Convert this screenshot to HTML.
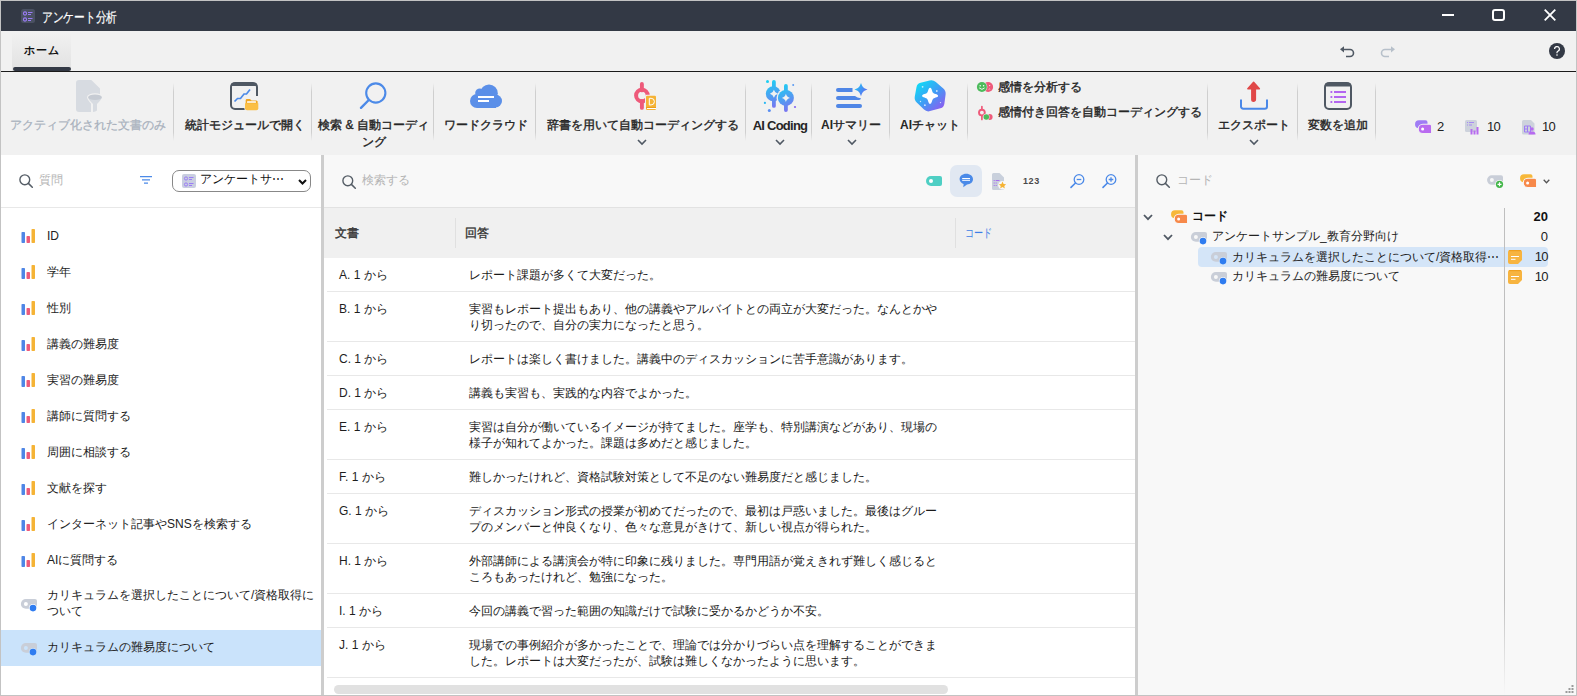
<!DOCTYPE html>
<html lang="ja">
<head>
<meta charset="utf-8">
<style>
*{box-sizing:border-box;margin:0;padding:0}
html,body{width:1577px;height:696px;overflow:hidden;background:#f1f1f1}
body{font-family:"Liberation Sans",sans-serif;color:#1f1f1f;position:relative;font-size:12px}
.a{position:absolute}
svg{position:absolute;display:block;overflow:visible}
.t{position:absolute;white-space:nowrap;line-height:16px}
/* frame */
#frame{position:absolute;left:0;top:0;width:1577px;height:696px;border:1px solid #c3c3c3;pointer-events:none;z-index:50}
#title{left:0;top:0;width:1577px;height:31px;background:#333945}
#title .t{color:#fff;font-size:14px;left:42px;top:9px;-webkit-text-stroke:0.2px #fff}
/* tabs */
#tab{left:12px;top:33px;width:59px;height:38px;background:linear-gradient(#f1f1f1,#e1e1e1)}
#tabline{left:13px;top:67px;width:58px;height:4px;background:#333945;border-radius:2px}
#hline{left:0;top:71px;width:1577px;height:1px;background:#1b1b1b}
/* ribbon */
.sep{position:absolute;top:83px;width:1px;height:58px;background:linear-gradient(rgba(200,200,200,0),#cfcfcf 15%,#cfcfcf 85%,rgba(200,200,200,0))}
.rl{position:absolute;top:117px;font-size:12px;font-weight:normal;-webkit-text-stroke:0.4px currentColor;color:#262626;white-space:nowrap;line-height:17px;text-align:center}
.chev{position:absolute;top:139px;width:10px;height:6px}
/* panels */
#left{left:1px;top:155px;width:320px;height:540px;background:#fff}
#split1{left:321px;top:155px;width:3px;height:540px;background:#cdcdcd}
#center{left:324px;top:155px;width:811px;height:540px;background:#fff}
#split2{left:1135px;top:155px;width:3px;height:540px;background:#cdcdcd}
#right{left:1138px;top:155px;width:438px;height:540px;background:#f8f8f8}
.ph{color:#b5b5b5;font-size:12px}
.li{position:absolute;left:47px;font-size:12px;color:#222;white-space:nowrap;line-height:16px}
.bar{position:absolute;left:21px;width:15px;height:14px;margin-top:1px}
.row{position:absolute;left:327px;width:808px;height:1px;background:#e8e8e8}
.doc{position:absolute;margin-top:1px;left:339px;font-size:12px;color:#1e1e1e;white-space:nowrap;line-height:16px}
.ans{position:absolute;margin-top:1px;left:469px;font-size:12px;color:#1a1a1a;white-space:nowrap;line-height:16px}
</style>
</head>
<body>
<!-- TITLE BAR -->
<div id="title" class="a">
  <svg style="left:21px;top:9px" width="14" height="14" viewBox="0 0 14 14">
    <rect x="0" y="0" width="14" height="14" rx="2.5" fill="#4a5162"/>
    <circle cx="4" cy="4.5" r="1.6" fill="none" stroke="#9b7cf6" stroke-width="1.1"/>
    <circle cx="4" cy="10.5" r="1.6" fill="none" stroke="#9b7cf6" stroke-width="1.1"/>
    <path d="M7 3.5h4.5M7 5.5h3M7 9.5h4.5M7 11.5h3" stroke="#9b7cf6" stroke-width="1"/>
  </svg>
  <div class="t" style="transform:scaleX(0.765);transform-origin:0 0">アンケート分析</div>
  <svg style="left:1442px;top:14px" width="12" height="2"><rect width="12" height="2" fill="#fff"/></svg>
  <svg style="left:1492px;top:9px" width="13" height="12" viewBox="0 0 13 12"><rect x="1" y="1" width="11" height="10" rx="2" fill="none" stroke="#fff" stroke-width="2"/></svg>
  <svg style="left:1544px;top:9px" width="12" height="12" viewBox="0 0 12 12"><path d="M0.7 0.7L11.3 11.3M11.3 0.7L0.7 11.3" stroke="#fff" stroke-width="1.8"/></svg>
</div>
<!-- TAB BAR -->
<div id="tab" class="a"></div>
<div class="t" style="left:24px;top:42px;font-size:11px;font-weight:bold;color:#111;letter-spacing:1.2px">ホーム</div>
<div id="tabline" class="a"></div>
<div id="hline" class="a"></div>
<!-- undo / redo / help -->
<svg style="left:1340px;top:46px" width="15" height="11" viewBox="0 0 15 11">
  <path d="M3 3.5h7a3.5 3.5 0 0 1 0 7H6" fill="none" stroke="#4f5863" stroke-width="1.6"/>
  <path d="M0 3.3L4 0.2V6.4z" fill="#4f5863"/>
</svg>
<svg style="left:1380px;top:46px" width="15" height="11" viewBox="0 0 15 11">
  <path d="M12 3.5H5a3.5 3.5 0 0 0 0 7h4" fill="none" stroke="#b7c0ca" stroke-width="1.6"/>
  <path d="M15 3.3L11 0.2V6.4z" fill="#b7c0ca"/>
</svg>
<svg style="left:1549px;top:43px" width="16" height="16" viewBox="0 0 16 16">
  <circle cx="8" cy="8" r="8" fill="#333945"/>
  <path d="M5.6 6.1a2.4 2.4 0 1 1 3.2 2.2c-.6.3-.8.6-.8 1.3v.6" fill="none" stroke="#fff" stroke-width="1.2"/>
  <circle cx="8" cy="12" r=".8" fill="#fff"/>
</svg>
<!-- RIBBON -->

<!-- separators -->
<div class="sep" style="left:173px"></div>
<div class="sep" style="left:311px"></div>
<div class="sep" style="left:433px"></div>
<div class="sep" style="left:535px"></div>
<div class="sep" style="left:745px"></div>
<div class="sep" style="left:811px"></div>
<div class="sep" style="left:889px"></div>
<div class="sep" style="left:967px"></div>
<div class="sep" style="left:1207px"></div>
<div class="sep" style="left:1297px"></div>
<div class="sep" style="left:1375px"></div>
<!-- 1 doc filter (disabled) -->
<svg style="left:76px;top:80px" width="27" height="32" viewBox="0 0 27 32">
  <path d="M3 0h12.3l8.7 8.6V16H15V32H3a3 3 0 0 1-3-3V3a3 3 0 0 1 3-3z" fill="#d7dbe1"/>
  <path d="M12.1 17.3a6.9 2.9 0 0 1 13.8 0q-.6 2.6-4.9 6.6v6.6q-1.6 1.2-4 1.5v-8.1q-4.4-4-4.9-6.6z" fill="#d7dbe1" stroke="#f1f1f1" stroke-width="2.2"/>
  <path d="M12.1 17.3q.5 2.6 4.9 6.6v8q2.4-.3 4-1.5v-6.5q4.3-4 4.9-6.6z" fill="#d7dbe1"/>
  <ellipse cx="19" cy="17.3" rx="6.9" ry="2.8" fill="#c6cbd3"/>
</svg>
<div class="rl" style="left:8px;width:160px;color:#a9b1bd;font-weight:normal;-webkit-text-stroke:0.25px #a9b1bd">アクティブ化された文書のみ</div>
<!-- 2 stats -->
<svg style="left:230px;top:82px" width="28" height="28" viewBox="0 0 28 28">
  <path d="M16 27H5a4 4 0 0 1-4-4V5a4 4 0 0 1 4-4h18a4 4 0 0 1 4 4v9" fill="none" stroke="#4f5863" stroke-width="2"/>
  <rect x="1" y="1" width="26" height="3" rx="1.5" fill="#4f5863"/>
  <path d="M4.5 19.5l3-3h3l3.5-4.5h2.5l3.5-4.5" fill="none" stroke="#4c8ae8" stroke-width="1.7"/>
  <path d="M15 18.3a2 2 0 0 1 2-2h3.2l1.6 1.6H26.5a1.8 1.8 0 0 1 1.8 1.8V26.3a2 2 0 0 1-2 2H17a2 2 0 0 1-2-2z" fill="#f0a623" stroke="#f1f1f1" stroke-width="1.3"/><path d="M15 21.3h13.3v5a2 2 0 0 1-2 2H17a2 2 0 0 1-2-2z" fill="#fbbf45"/>
  <rect x="17" y="19.2" width="9" height="1.6" rx=".5" fill="#fff"/>
</svg>
<div class="rl" style="left:165px;width:160px">統計モジュールで開く</div>
<!-- 3 search -->
<svg style="left:359px;top:82px" width="28" height="28" viewBox="0 0 28 28">
  <circle cx="16.8" cy="11" r="9.6" fill="none" stroke="#4c8ae8" stroke-width="2.1"/>
  <path d="M9.8 18l-7.8 7.8" stroke="#4c8ae8" stroke-width="2.4" stroke-linecap="round"/>
</svg>
<div class="rl" style="left:313px;width:121px">検索 &amp; 自動コーディ<br>ング</div>
<!-- 4 word cloud -->
<svg style="left:470px;top:84px" width="32" height="24" viewBox="0 0 32 24">
  <g fill="#5b8fe8"><circle cx="19" cy="9.3" r="8.8"/><circle cx="9.8" cy="9" r="4.6"/><circle cx="7" cy="17" r="7"/><circle cx="25.5" cy="17" r="6.5"/><rect x="7" y="10" width="19" height="14"/></g>
  <rect x="8" y="12" width="16" height="2" fill="#fff"/>
  <rect x="8" y="16" width="11" height="2" fill="#fff"/>
</svg>
<div class="rl" style="left:436px;width:100px">ワードクラウド</div>
<!-- 5 dict -->
<svg style="left:634px;top:82px" width="24" height="29" viewBox="0 0 24 29">
  <path d="M7.9 1.9v6.5M7.9 19v6.9" stroke="#ee5a7a" stroke-width="3.9" stroke-linecap="round"/>
  <circle cx="7.9" cy="13.6" r="5.8" fill="none" stroke="#ee5a7a" stroke-width="4"/>
  <rect x="11" y="12.8" width="12" height="16" rx="1.5" fill="#f1f1f1"/>
  <rect x="12" y="13.8" width="10" height="14.2" rx="1.2" fill="#f5b335"/>
  <rect x="12" y="25.2" width="10" height="1" fill="#e89b1a"/>
  <rect x="13" y="26" width="9" height="1" fill="#fff"/>
  <path d="M15.3 16.3h1.8a3.1 3.1 0 0 1 0 6.6h-1.8z" fill="none" stroke="#fff" stroke-width="1"/>
</svg>
<div class="rl" style="left:543px;width:200px">辞書を用いて自動コーディングする</div>
<svg class="chev" style="left:637px" viewBox="0 0 10 6"><path d="M1 1l4 4 4-4" fill="none" stroke="#4f5863" stroke-width="1.6"/></svg>
<!-- 6 AI coding -->
<svg style="left:763px;top:80px" width="34" height="32" viewBox="0 0 34 32">
  <defs><linearGradient id="g1" gradientUnits="userSpaceOnUse" x1="4" y1="2" x2="16" y2="30"><stop offset="0" stop-color="#1ccff3"/><stop offset="1" stop-color="#8668f0"/></linearGradient>
  <linearGradient id="g1b" gradientUnits="userSpaceOnUse" x1="16" y1="6" x2="30" y2="32"><stop offset="0" stop-color="#1ccff3"/><stop offset="1" stop-color="#8668f0"/></linearGradient></defs>
  <rect x="9" y="0" width="3.8" height="27.8" rx="1.9" fill="url(#g1)"/>
  <circle cx="10.3" cy="13.8" r="7.5" fill="url(#g1)"/>
  <path d="M10.9 9.8q.8 3.2 4 4-3.2.8-4 4-.8-3.2-4-4 3.2-.8 4-4z" fill="#f1f1f1"/>
  <circle cx="22.9" cy="17.9" r="9.4" fill="#f1f1f1"/>
  <rect x="21" y="4" width="3.8" height="28" rx="1.9" fill="url(#g1b)"/>
  <circle cx="22.9" cy="17.9" r="8" fill="url(#g1b)"/>
  <path d="M22.9 13.8q.8 3.3 4.1 4.1-3.3.8-4.1 4.1-.8-3.3-4.1-4.1 3.3-.8 4.1-4.1z" fill="#f1f1f1"/>
  <circle cx="4.5" cy="1.4" r="1.5" fill="#1ccff3"/><circle cx="30.2" cy="5" r="1" fill="#5a9af2"/><circle cx="1.9" cy="22.9" r="1.1" fill="#2ab8f3"/><circle cx="32" cy="27" r="1.1" fill="#8668f0"/><circle cx="6.3" cy="30.4" r="1.5" fill="#5a8ef2"/>
</svg>
<div class="rl" style="left:747px;width:66px;font-size:13px;letter-spacing:-0.75px;font-weight:bold;-webkit-text-stroke:0">AI Coding</div>
<svg class="chev" style="left:775px" viewBox="0 0 10 6"><path d="M1 1l4 4 4-4" fill="none" stroke="#4f5863" stroke-width="1.6"/></svg>
<!-- 7 AI summary -->
<svg style="left:836px;top:82px" width="32" height="26" viewBox="0 0 32 26">
  <defs><linearGradient id="g2" x1="0" y1="0.2" x2="1" y2="0.9"><stop offset="0" stop-color="#1cc8f5"/><stop offset="1" stop-color="#6d5cf2"/></linearGradient></defs>
  <path d="M2 6h14.5v4H2a2 2 0 0 1 0-4z" fill="#4f86e6"/>
  <path d="M2 14h17q2 2 6 2.3-.3 1.7-2 1.7H2a2 2 0 0 1 0-4z" fill="#4f86e6"/>
  <rect x="0" y="22" width="26" height="4" rx="2" fill="#4f86e6"/>
  <path d="M25 1.0C26.32 4.96 27.64 6.28 31.6 7.6C27.64 8.92 26.32 10.24 25 14.2C23.68 10.24 22.36 8.92 18.4 7.6C22.36 6.28 23.68 4.96 25 1.0z" fill="url(#g2)"/>
</svg>
<div class="rl" style="left:812px;width:78px"><b style="-webkit-text-stroke:0">AI</b>サマリー</div>
<svg class="chev" style="left:847px" viewBox="0 0 10 6"><path d="M1 1l4 4 4-4" fill="none" stroke="#4f5863" stroke-width="1.6"/></svg>
<!-- 8 AI chat -->
<svg style="left:914px;top:80px" width="32" height="32" viewBox="0 0 32 32">
  <defs><linearGradient id="g3" x1="0.1" y1="0.15" x2="0.85" y2="0.95"><stop offset="0" stop-color="#14d6f5"/><stop offset="0.5" stop-color="#3f9cf5"/><stop offset="1" stop-color="#8d5cf0"/></linearGradient></defs>
  <path d="M21.82 2.07L29.33 8.51Q32.07 10.85 31.60 14.42L30.37 23.76Q29.91 27.33 26.43 28.28L16.07 31.12Q12.60 32.07 10.00 29.58L2.74 22.61Q0.14 20.12 0.78 16.58L2.48 7.18Q3.12 3.64 6.62 2.78L15.59 0.58Q19.09 -0.27 21.82 2.07z" fill="url(#g3)"/>
  <path d="M16.1 7.800000000000001C18.0 7.800000000000001 18.1 12.700000000000001 19.200000000000003 12.700000000000001C19.200000000000003 13.8 24.1 13.9 24.1 15.8C24.1 17.7 19.200000000000003 17.8 19.200000000000003 18.900000000000002C18.1 18.900000000000002 18.0 23.8 16.1 23.8C14.200000000000001 23.8 14.100000000000001 18.900000000000002 13.000000000000002 18.900000000000002C13.000000000000002 17.8 8.100000000000001 17.7 8.100000000000001 15.8C8.100000000000001 13.9 13.000000000000002 13.8 13.000000000000002 12.700000000000001C14.100000000000001 12.700000000000001 14.200000000000001 7.800000000000001 16.1 7.800000000000001z" fill="#fff"/>
  <circle cx="8.6" cy="6.8" r=".9" fill="#fff" opacity=".75"/><circle cx="22.8" cy="11" r=".9" fill="#fff" opacity=".75"/><circle cx="6.5" cy="21.5" r=".7" fill="#fff" opacity=".75"/><circle cx="10.9" cy="25.2" r=".9" fill="#fff" opacity=".75"/><circle cx="26.5" cy="22.6" r=".7" fill="#fff" opacity=".75"/>
</svg>
<div class="rl" style="left:891px;width:78px"><b style="-webkit-text-stroke:0">AI</b>チャット</div>
<!-- 9 emotion -->
<svg style="left:977px;top:82px" width="17" height="11" viewBox="0 0 17 11">
  <circle cx="11.1" cy="5" r="5" fill="#ee5a7a"/>
  <circle cx="12.7" cy="3.6" r=".55" fill="#fff"/><path d="M11.6 7.3q.8-.7 1.6 0" fill="none" stroke="#fff" stroke-width=".6"/>
  <circle cx="4.9" cy="5" r="5.4" fill="#f1f1f1"/>
  <circle cx="4.9" cy="5" r="5" fill="#4dbb5c"/>
  <circle cx="3.2" cy="3.7" r=".75" fill="#fff"/><circle cx="6.6" cy="3.7" r=".75" fill="#fff"/>
  <path d="M2.2 5.9q2.7 2.9 5.4 0" fill="none" stroke="#fff" stroke-width=".9"/>
</svg>
<div class="rl" style="left:998px;top:79px;text-align:left">感情を分析する</div>
<svg style="left:977px;top:106px" width="17" height="14" viewBox="0 0 17 14">
  <path d="M4.9 0.6v2.6M4.9 10v3.4" stroke="#ee5a7a" stroke-width="1.7" stroke-linecap="round"/>
  <circle cx="4.9" cy="6.6" r="2.9" fill="none" stroke="#ee5a7a" stroke-width="1.9"/>
  <circle cx="12.6" cy="11" r="3" fill="#ee5a7a"/>
  <circle cx="9.3" cy="11" r="3.2" fill="#f1f1f1"/>
  <circle cx="9.3" cy="11" r="2.8" fill="#4dbb5c"/>
</svg>
<div class="rl" style="left:998px;top:104px;text-align:left">感情付き回答を自動コーディングする</div>
<!-- 10 export -->
<svg style="left:1239px;top:81px" width="30" height="30" viewBox="0 0 30 30">
  <path d="M14.6 1.3L20.4 7.8h-4v10.6a1.8 1.8 0 0 1-3.6 0V7.8h-4z" fill="#e04848" stroke="#e04848" stroke-width="1.4" stroke-linejoin="round"/>
  <path d="M2 18.5v7a2.2 2.2 0 0 0 2.2 2.2h21.6a2.2 2.2 0 0 0 2.2-2.2v-7" fill="none" stroke="#4a88e8" stroke-width="2"/>
</svg>
<div class="rl" style="left:1209px;width:90px">エクスポート</div>
<svg class="chev" style="left:1249px" viewBox="0 0 10 6"><path d="M1 1l4 4 4-4" fill="none" stroke="#4f5863" stroke-width="1.6"/></svg>
<!-- 11 variable -->
<svg style="left:1324px;top:82px" width="28" height="28" viewBox="0 0 28 28">
  <rect x="1" y="1" width="26" height="26" rx="4" fill="none" stroke="#4f5863" stroke-width="2"/>
  <rect x="1" y="1" width="26" height="3.5" rx="1.5" fill="#4f5863"/>
  <path d="M6.5 10h1.8M10 10h12M6.5 15h1.8M10 15h12M6.5 20h1.8M10 20h12" stroke="#b366f0" stroke-width="2"/>
</svg>
<div class="rl" style="left:1299px;width:78px">変数を追加</div>
<!-- stats -->
<svg style="left:1415px;top:120px" width="17" height="14" viewBox="0 0 17 14">
  <path d="M4 0.3H10.5a2 2 0 0 1 2 2V8.2H4a3.95 3.95 0 0 1 0-7.9z" fill="#9f7cf5"/>
  <path d="M7.8 4.3H14.6a2 2 0 0 1 2 2V13.5H7.8a4.6 4.6 0 0 1 0-9.2z" fill="#b96bf0" stroke="#f1f1f1" stroke-width="1.1"/>
  <circle cx="7.6" cy="8.9" r="1.5" fill="#fff"/>
</svg>
<div class="t" style="left:1437px;top:119px;font-size:13px;color:#222">2</div>
<svg style="left:1465px;top:120px" width="15" height="15" viewBox="0 0 15 15">
  <rect x="0" y="0" width="12" height="12" rx="1.5" fill="#cdd2dc"/>
  <path d="M2 2.5h1M4 2.5h5M2 5h1M4 5h3" stroke="#a78bf3" stroke-width="1"/>
  <rect x="5.5" y="9" width="2" height="5.5" fill="#b76af0"/><rect x="8.5" y="10.5" width="2" height="4" fill="#b76af0"/><rect x="11.5" y="7" width="2" height="7.5" fill="#b76af0"/>
</svg>
<div class="t" style="left:1487px;top:119px;letter-spacing:-0.7px;font-size:13px;color:#222">10</div>
<svg style="left:1522px;top:120px" width="14" height="15" viewBox="0 0 14 15">
  <path d="M1.5 0H9l3.5 3.5V13a1.5 1.5 0 0 1-1.5 1.5H1.5A1.5 1.5 0 0 1 0 13V1.5A1.5 1.5 0 0 1 1.5 0z" fill="#cdd2dc"/>
  <path d="M2.5 6h6v6h-6zM5.5 6v6M2.5 9h3" fill="none" stroke="#9f7cf5" stroke-width="1"/>
  <circle cx="10" cy="9" r="1.7" fill="#b76af0"/><path d="M6.5 14.5q0-3 3.5-3t3.5 3z" fill="#b76af0"/>
</svg>
<div class="t" style="left:1542px;top:119px;letter-spacing:-0.7px;font-size:13px;color:#222">10</div>

<!-- PANELS -->
<div id="left" class="a"></div>
<div id="split1" class="a"></div>
<div id="center" class="a"></div>
<div id="split2" class="a"></div>
<div id="right" class="a"></div>
<!-- LEFT PANEL -->
<svg style="left:19px;top:174px" width="14" height="14" viewBox="0 0 14 14"><circle cx="5.8" cy="5.8" r="4.9" fill="none" stroke="#555d66" stroke-width="1.4"/><path d="M9.4 9.4l3.9 3.9" stroke="#555d66" stroke-width="1.5" stroke-linecap="round"/></svg>
<div class="t ph" style="left:39px;top:172px">質問</div>
<svg style="left:140px;top:176px" width="12" height="8" viewBox="0 0 12 8"><path d="M0 0.6h12M2 3.9h8M4 7.2h4" stroke="#4c8ae8" stroke-width="1.2"/></svg>
<div class="a" style="left:172px;top:170px;width:139px;height:22px;border:1px solid #888;border-radius:7px;background:#fff"></div>
<svg style="left:182px;top:174px" width="14" height="14" viewBox="0 0 14 14"><rect width="14" height="14" rx="2" fill="#c9cee0"/><circle cx="4" cy="4.5" r="1.6" fill="none" stroke="#9b7cf6" stroke-width="1"/><circle cx="4" cy="10.5" r="1.6" fill="none" stroke="#9b7cf6" stroke-width="1"/><path d="M7 3.5h4.5M7 5.5h3M7 9.5h4.5M7 11.5h3" stroke="#9b7cf6" stroke-width="1"/></svg>
<div class="t" style="left:200px;top:171px;font-size:12px;color:#111">アンケートサ⋯</div>
<svg style="left:298px;top:179px" width="9" height="6" viewBox="0 0 9 6"><path d="M1 1l3.5 3.5L8 1" fill="none" stroke="#111" stroke-width="2"/></svg>
<div class="a" style="left:1px;top:207px;width:320px;height:1px;background:#e8e8e8"></div>

<svg class="bar" style="top:228px" viewBox="0 0 15 14"><rect x="0.5" y="3" width="3.5" height="11" rx="0.8" fill="#4f86e6"/><rect x="5.5" y="7" width="3.5" height="7" rx="0.8" fill="#ee5a7a"/><rect x="10.5" y="0" width="3.5" height="14" rx="0.8" fill="#f5b335"/></svg>
<div class="li" style="top:227.5px">ID</div>
<svg class="bar" style="top:264px" viewBox="0 0 15 14"><rect x="0.5" y="3" width="3.5" height="11" rx="0.8" fill="#4f86e6"/><rect x="5.5" y="7" width="3.5" height="7" rx="0.8" fill="#ee5a7a"/><rect x="10.5" y="0" width="3.5" height="14" rx="0.8" fill="#f5b335"/></svg>
<div class="li" style="top:263.5px">学年</div>
<svg class="bar" style="top:300px" viewBox="0 0 15 14"><rect x="0.5" y="3" width="3.5" height="11" rx="0.8" fill="#4f86e6"/><rect x="5.5" y="7" width="3.5" height="7" rx="0.8" fill="#ee5a7a"/><rect x="10.5" y="0" width="3.5" height="14" rx="0.8" fill="#f5b335"/></svg>
<div class="li" style="top:299.5px">性別</div>
<svg class="bar" style="top:336px" viewBox="0 0 15 14"><rect x="0.5" y="3" width="3.5" height="11" rx="0.8" fill="#4f86e6"/><rect x="5.5" y="7" width="3.5" height="7" rx="0.8" fill="#ee5a7a"/><rect x="10.5" y="0" width="3.5" height="14" rx="0.8" fill="#f5b335"/></svg>
<div class="li" style="top:335.5px">講義の難易度</div>
<svg class="bar" style="top:372px" viewBox="0 0 15 14"><rect x="0.5" y="3" width="3.5" height="11" rx="0.8" fill="#4f86e6"/><rect x="5.5" y="7" width="3.5" height="7" rx="0.8" fill="#ee5a7a"/><rect x="10.5" y="0" width="3.5" height="14" rx="0.8" fill="#f5b335"/></svg>
<div class="li" style="top:371.5px">実習の難易度</div>
<svg class="bar" style="top:408px" viewBox="0 0 15 14"><rect x="0.5" y="3" width="3.5" height="11" rx="0.8" fill="#4f86e6"/><rect x="5.5" y="7" width="3.5" height="7" rx="0.8" fill="#ee5a7a"/><rect x="10.5" y="0" width="3.5" height="14" rx="0.8" fill="#f5b335"/></svg>
<div class="li" style="top:407.5px">講師に質問する</div>
<svg class="bar" style="top:444px" viewBox="0 0 15 14"><rect x="0.5" y="3" width="3.5" height="11" rx="0.8" fill="#4f86e6"/><rect x="5.5" y="7" width="3.5" height="7" rx="0.8" fill="#ee5a7a"/><rect x="10.5" y="0" width="3.5" height="14" rx="0.8" fill="#f5b335"/></svg>
<div class="li" style="top:443.5px">周囲に相談する</div>
<svg class="bar" style="top:480px" viewBox="0 0 15 14"><rect x="0.5" y="3" width="3.5" height="11" rx="0.8" fill="#4f86e6"/><rect x="5.5" y="7" width="3.5" height="7" rx="0.8" fill="#ee5a7a"/><rect x="10.5" y="0" width="3.5" height="14" rx="0.8" fill="#f5b335"/></svg>
<div class="li" style="top:479.5px">文献を探す</div>
<svg class="bar" style="top:516px" viewBox="0 0 15 14"><rect x="0.5" y="3" width="3.5" height="11" rx="0.8" fill="#4f86e6"/><rect x="5.5" y="7" width="3.5" height="7" rx="0.8" fill="#ee5a7a"/><rect x="10.5" y="0" width="3.5" height="14" rx="0.8" fill="#f5b335"/></svg>
<div class="li" style="top:515.5px">インターネット記事やSNSを検索する</div>
<svg class="bar" style="top:552px" viewBox="0 0 15 14"><rect x="0.5" y="3" width="3.5" height="11" rx="0.8" fill="#4f86e6"/><rect x="5.5" y="7" width="3.5" height="7" rx="0.8" fill="#ee5a7a"/><rect x="10.5" y="0" width="3.5" height="14" rx="0.8" fill="#f5b335"/></svg>
<div class="li" style="top:551.5px">AIに質問する</div>
<div class="a" style="left:1px;top:630px;width:320px;height:36px;background:#cae3fb"></div>
<svg style="left:21px;top:599px" width="17" height="14" viewBox="0 0 17 14"><path d="M4.8 0H14a2 2 0 0 1 2 2V9.8H4.8a4.9 4.9 0 0 1 0-9.8z" fill="#c9ced8"/><circle cx="4.9" cy="5" r="2" fill="#ffffff"/><circle cx="12" cy="9.1" r="4.2" fill="#ffffff"/><circle cx="12" cy="9.1" r="3.3" fill="#2f7cf0"/></svg>
<div class="li" style="top:587px">カリキュラムを選択したことについて/資格取得に<br>ついて</div>
<svg style="left:21px;top:643px" width="17" height="14" viewBox="0 0 17 14"><path d="M4.8 0H14a2 2 0 0 1 2 2V9.8H4.8a4.9 4.9 0 0 1 0-9.8z" fill="#c9ced8"/><circle cx="4.9" cy="5" r="2" fill="#cae3fb"/><circle cx="12" cy="9.1" r="4.2" fill="#cae3fb"/><circle cx="12" cy="9.1" r="3.3" fill="#2f7cf0"/></svg>
<div class="li" style="top:639px">カリキュラムの難易度について</div>
<!-- CENTER PANEL -->
<div class="a" style="left:324px;top:155px;width:811px;height:52px;background:#f8f8f8"></div>
<div class="a" style="left:324px;top:207px;width:811px;height:1px;background:#e2e2e2"></div>
<div class="a" style="left:324px;top:208px;width:811px;height:50px;background:#f0f0f0"></div>
<svg style="left:342px;top:175px" width="14" height="14" viewBox="0 0 14 14"><circle cx="5.8" cy="5.8" r="4.9" fill="none" stroke="#555d66" stroke-width="1.4"/><path d="M9.4 9.4l3.9 3.9" stroke="#555d66" stroke-width="1.5" stroke-linecap="round"/></svg>
<div class="t ph" style="left:362px;top:172px">検索する</div>
<svg style="left:926px;top:176px" width="17" height="10" viewBox="0 0 17 10"><path d="M5 0H14a2 2 0 0 1 2 2V8a2 2 0 0 1-2 2H5a5 5 0 0 1 0-10z" fill="#4fcfc4"/><circle cx="5" cy="5" r="2" fill="#fff"/></svg>
<div class="a" style="left:950px;top:165px;width:32px;height:32px;border-radius:7px;background:#e1e8f2"></div>
<svg style="left:959px;top:173px" width="15" height="15" viewBox="0 0 15 15"><path d="M7.2 0.8C11 0.8 14 3.2 14 6.2S11.3 11.2 8 11.4L4.3 14.3 4.6 10.9C2.3 10 0.6 8.3 0.6 6.2 0.6 3.2 3.5 0.8 7.2 0.8z" fill="#4a8ae8"/><path d="M3.2 5.5h7.8M3.2 7.3h7.8" stroke="#fff" stroke-width="1"/></svg>
<svg style="left:992px;top:173px" width="15" height="17" viewBox="0 0 15 17"><path d="M1.5 0H7.5l4.5 4.5v11a1.5 1.5 0 0 1-1.5 1.5h-9A1.5 1.5 0 0 1 0 15.5V1.5A1.5 1.5 0 0 1 1.5 0z" fill="#c9d0dc"/>
<path d="M1.7 7.5h1M3.7 7.5h3.8M1.7 10h1M3.7 10h1M1.7 12.5h1M3.7 12.5h1" stroke="#a76bf0" stroke-width="1"/>
<circle cx="10.5" cy="12.2" r="4.3" fill="#f8f8f8"/>
<path d="M10.5 8.6l1.1 2.3 2.5.3-1.8 1.7.5 2.5-2.3-1.3-2.3 1.3.5-2.5-1.8-1.7 2.5-.3z" fill="#f5b335"/></svg>
<div class="t" style="left:1023px;top:173px;font-size:9px;font-weight:bold;color:#4a4a4a;letter-spacing:0.6px">123</div>
<svg style="left:1070px;top:174px" width="15" height="14" viewBox="0 0 15 14"><circle cx="9" cy="5.5" r="4.8" fill="none" stroke="#4c8ae8" stroke-width="1.3"/><path d="M6.7 5.5h4.6" stroke="#4c8ae8" stroke-width="1.3"/><path d="M5.5 9L1 13.4" stroke="#4c8ae8" stroke-width="1.6" stroke-linecap="round"/></svg>
<svg style="left:1102px;top:174px" width="15" height="14" viewBox="0 0 15 14"><circle cx="9" cy="5.5" r="4.8" fill="none" stroke="#4c8ae8" stroke-width="1.3"/><path d="M6.7 5.5h4.6M9 3.2v4.6" stroke="#4c8ae8" stroke-width="1.3"/><path d="M5.5 9L1 13.4" stroke="#4c8ae8" stroke-width="1.6" stroke-linecap="round"/></svg>
<div class="t" style="left:335px;top:225px;font-size:12px;color:#333;-webkit-text-stroke:0.35px #333">文書</div>
<div class="a" style="left:455px;top:218px;width:1px;height:30px;background:#e0e0e0"></div>
<div class="t" style="left:465px;top:225px;font-size:12px;color:#333;-webkit-text-stroke:0.35px #333">回答</div>
<div class="a" style="left:955px;top:218px;width:1px;height:30px;background:#e0e0e0"></div>
<div class="t" style="left:965px;top:225px;font-size:12px;color:#3d7ee6;transform:scaleX(0.76);transform-origin:0 0">コード</div>

<div class="doc" style="top:266px">A. 1 から</div>
<div class="ans" style="top:266px">レポート課題が多くて大変だった。</div>
<div class="row" style="top:291px"></div>
<div class="doc" style="top:300px">B. 1 から</div>
<div class="ans" style="top:300px">実習もレポート提出もあり、他の講義やアルバイトとの両立が大変だった。なんとかや<br>り切ったので、自分の実力になったと思う。</div>
<div class="row" style="top:341px"></div>
<div class="doc" style="top:350px">C. 1 から</div>
<div class="ans" style="top:350px">レポートは楽しく書けました。講義中のディスカッションに苦手意識があります。</div>
<div class="row" style="top:375px"></div>
<div class="doc" style="top:384px">D. 1 から</div>
<div class="ans" style="top:384px">講義も実習も、実践的な内容でよかった。</div>
<div class="row" style="top:409px"></div>
<div class="doc" style="top:418px">E. 1 から</div>
<div class="ans" style="top:418px">実習は自分が働いているイメージが持てました。座学も、特別講演などがあり、現場の<br>様子が知れてよかった。課題は多めだと感じました。</div>
<div class="row" style="top:459px"></div>
<div class="doc" style="top:468px">F. 1 から</div>
<div class="ans" style="top:468px">難しかったけれど、資格試験対策として不足のない難易度だと感じました。</div>
<div class="row" style="top:493px"></div>
<div class="doc" style="top:502px">G. 1 から</div>
<div class="ans" style="top:502px">ディスカッション形式の授業が初めてだったので、最初は戸惑いました。最後はグルー<br>プのメンバーと仲良くなり、色々な意見がきけて、新しい視点が得られた。</div>
<div class="row" style="top:543px"></div>
<div class="doc" style="top:552px">H. 1 から</div>
<div class="ans" style="top:552px">外部講師による講演会が特に印象に残りました。専門用語が覚えきれず難しく感じると<br>ころもあったけれど、勉強になった。</div>
<div class="row" style="top:593px"></div>
<div class="doc" style="top:602px">I. 1 から</div>
<div class="ans" style="top:602px">今回の講義で習った範囲の知識だけで試験に受かるかどうか不安。</div>
<div class="row" style="top:627px"></div>
<div class="doc" style="top:636px">J. 1 から</div>
<div class="ans" style="top:636px">現場での事例紹介が多かったことで、理論では分かりづらい点を理解することができま<br>した。レポートは大変だったが、試験は難しくなかったように思います。</div>
<div class="row" style="top:677px"></div>
<div class="a" style="left:334px;top:685px;width:614px;height:9px;border-radius:5px;background:#e1e1e1"></div>
<!-- RIGHT PANEL -->
<svg style="left:1156px;top:174px" width="14" height="14" viewBox="0 0 14 14"><circle cx="5.8" cy="5.8" r="4.9" fill="none" stroke="#555d66" stroke-width="1.4"/><path d="M9.4 9.4l3.9 3.9" stroke="#555d66" stroke-width="1.5" stroke-linecap="round"/></svg>
<div class="t ph" style="left:1177px;top:172px">コード</div>
<svg style="left:1487px;top:175px" width="17" height="14" viewBox="0 0 17 14">
  <path d="M4.8 0.3H14a2 2 0 0 1 2 2V9.8H4.8a4.75 4.75 0 0 1 0-9.5z" fill="#c9ced8"/>
  <circle cx="4.9" cy="5" r="2" fill="#f8f8f8"/>
  <circle cx="12.5" cy="9.3" r="4.4" fill="#f8f8f8"/>
  <circle cx="12.5" cy="9.3" r="3.6" fill="#43b649"/>
  <path d="M10.5 9.3h4M12.5 7.3v4" stroke="#fff" stroke-width="1.2"/>
</svg>
<svg style="left:1520px;top:174px" width="17" height="14" viewBox="0 0 17 14"><path d="M4 0.3H10.5a2 2 0 0 1 2 2V8.2H4a3.95 3.95 0 0 1 0-7.9z" fill="#f7b83a"/><path d="M7.8 4.3H14.6a2 2 0 0 1 2 2V13.5H7.8a4.6 4.6 0 0 1 0-9.2z" fill="#f7894a" stroke="#f8f8f8" stroke-width="1.1"/><circle cx="7.6" cy="8.9" r="1.5" fill="#fff"/></svg>
<svg style="left:1543px;top:179px" width="7" height="5" viewBox="0 0 7 5"><path d="M0.7 0.8L3.5 3.8 6.3 0.8" fill="none" stroke="#555" stroke-width="1.3"/></svg>
<div class="a" style="left:1504px;top:208px;width:1px;height:487px;background:linear-gradient(#bfbfbf 80%,rgba(191,191,191,0))"></div>
<div class="a" style="left:1198px;top:247px;width:350px;height:20px;border-radius:4px;background:#d4e5f8"></div>
<div class="a" style="left:1504px;top:247px;width:1px;height:20px;background:#bfbfbf"></div>
<svg style="left:1143px;top:214px" width="10" height="7" viewBox="0 0 10 7"><path d="M1 1l4 4.2L9 1" fill="none" stroke="#4f5863" stroke-width="1.8"/></svg>
<svg style="left:1171px;top:210px" width="17" height="14" viewBox="0 0 17 14"><path d="M4 0.3H10.5a2 2 0 0 1 2 2V8.2H4a3.95 3.95 0 0 1 0-7.9z" fill="#f7b83a"/><path d="M7.8 4.3H14.6a2 2 0 0 1 2 2V13.5H7.8a4.6 4.6 0 0 1 0-9.2z" fill="#f7894a" stroke="#f8f8f8" stroke-width="1.1"/><circle cx="7.6" cy="8.9" r="1.5" fill="#fff"/></svg>
<div class="t" style="left:1192px;top:208px;font-size:12px;font-weight:bold;color:#111">コード</div>
<div class="t" style="left:1520px;top:209px;width:28px;text-align:right;font-size:13px;font-weight:bold;color:#111">20</div>
<svg style="left:1163px;top:234px" width="10" height="7" viewBox="0 0 10 7"><path d="M1 1l4 4.2L9 1" fill="none" stroke="#4f5863" stroke-width="1.8"/></svg>
<svg style="left:1191px;top:232px" width="17" height="14" viewBox="0 0 17 14"><path d="M4.8 0H14a2 2 0 0 1 2 2V9.8H4.8a4.9 4.9 0 0 1 0-9.8z" fill="#c9ced8"/><circle cx="4.9" cy="5" r="2" fill="#f8f8f8"/><circle cx="12" cy="9.1" r="4.2" fill="#f8f8f8"/><circle cx="12" cy="9.1" r="3.3" fill="#2f7cf0"/></svg>
<div class="t" style="left:1212px;top:228px;font-size:12px;color:#222">アンケートサンプル_教育分野向け</div>
<div class="t" style="left:1520px;top:229px;width:28px;text-align:right;font-size:13px;color:#222">0</div>
<svg style="left:1211px;top:252px" width="17" height="14" viewBox="0 0 17 14"><path d="M4.8 0H14a2 2 0 0 1 2 2V9.8H4.8a4.9 4.9 0 0 1 0-9.8z" fill="#c9ced8"/><circle cx="4.9" cy="5" r="2" fill="#d4e5f8"/><circle cx="12" cy="9.1" r="4.2" fill="#d4e5f8"/><circle cx="12" cy="9.1" r="3.3" fill="#2f7cf0"/></svg>
<div class="t" style="left:1232px;top:249px;font-size:12px;color:#222">カリキュラムを選択したことについて/資格取得⋯</div>
<svg style="left:1508px;top:250px" width="14" height="14" viewBox="0 0 14 14"><path d="M2 0h10a2 2 0 0 1 2 2v8l-4 4H2a2 2 0 0 1-2-2V2a2 2 0 0 1 2-2z" fill="#f7b440"/><path d="M1.2 0.6h11.6" stroke="#f0a01e" stroke-width="1.2"/><path d="M3 6.5h8M3 9.3h4.5" stroke="#fff" stroke-width="1"/></svg>
<div class="t" style="left:1520px;top:249px;width:28px;text-align:right;font-size:13px;letter-spacing:-0.6px;color:#222">10</div>
<svg style="left:1211px;top:272px" width="17" height="14" viewBox="0 0 17 14"><path d="M4.8 0H14a2 2 0 0 1 2 2V9.8H4.8a4.9 4.9 0 0 1 0-9.8z" fill="#c9ced8"/><circle cx="4.9" cy="5" r="2" fill="#f8f8f8"/><circle cx="12" cy="9.1" r="4.2" fill="#f8f8f8"/><circle cx="12" cy="9.1" r="3.3" fill="#2f7cf0"/></svg>
<div class="t" style="left:1232px;top:268px;font-size:12px;color:#222">カリキュラムの難易度について</div>
<svg style="left:1508px;top:270px" width="14" height="14" viewBox="0 0 14 14"><path d="M2 0h10a2 2 0 0 1 2 2v8l-4 4H2a2 2 0 0 1-2-2V2a2 2 0 0 1 2-2z" fill="#f7b440"/><path d="M1.2 0.6h11.6" stroke="#f0a01e" stroke-width="1.2"/><path d="M3 6.5h8M3 9.3h4.5" stroke="#fff" stroke-width="1"/></svg>
<div class="t" style="left:1520px;top:269px;width:28px;text-align:right;font-size:13px;letter-spacing:-0.6px;color:#222">10</div>
<svg style="left:1565px;top:685px" width="9" height="9" viewBox="0 0 9 9"><path d="M6.5 0h2v2h-2zM3.5 3h2v2h-2zM6.5 3h2v2h-2zM0.5 6h2v2h-2zM3.5 6h2v2h-2zM6.5 6h2v2h-2z" fill="#9a9a9a"/></svg>
<div id="frame"></div>
</body>
</html>
